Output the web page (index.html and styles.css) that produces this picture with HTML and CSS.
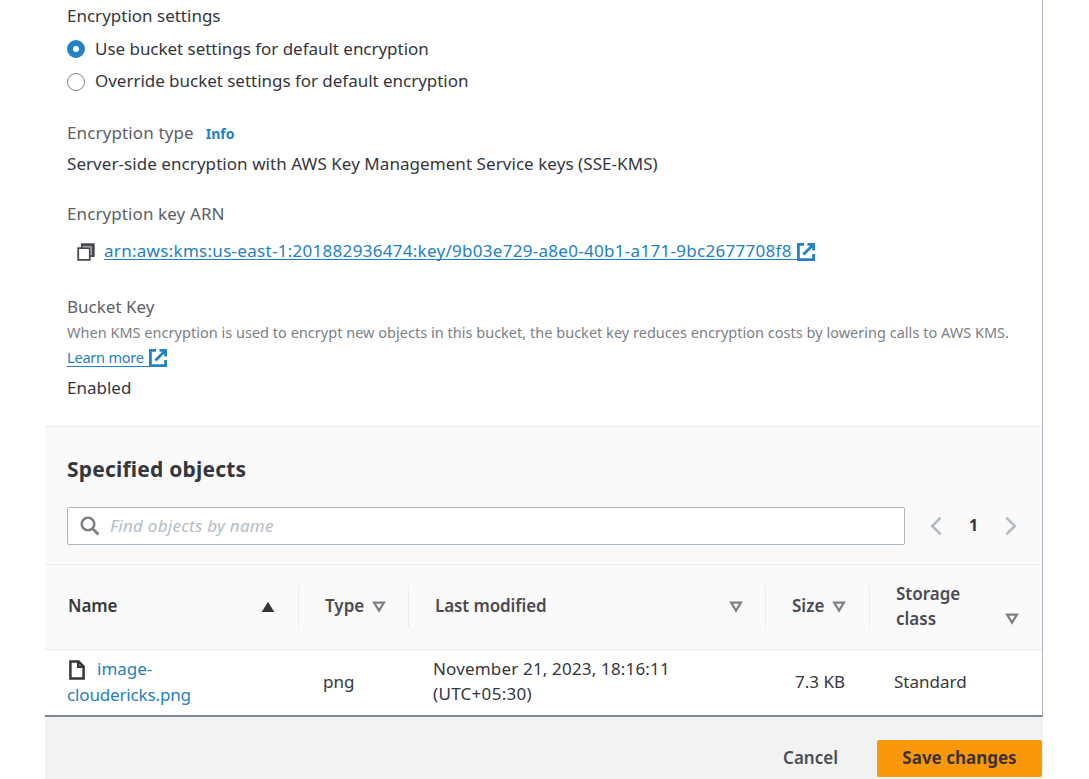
FILE: index.html
```html
<!DOCTYPE html>
<html lang="en">
<head>
<meta charset="utf-8">
<title>Edit server-side encryption</title>
<link rel="stylesheet" href="styles.css">
</head>
<body>
<svg class="defs" width="0" height="0">
  <symbol id="external" viewBox="0 0 18 18"><path d="M7 1.4H1.4v15.2h15.2V11M10.5 1.4h6.1v6.1M16 2 6.4 11.6" fill="none" stroke="currentColor" stroke-width="2.8"/></symbol>
  <symbol id="sort" viewBox="0 0 14 12"><path d="M2.1 1.6h9.8L7 9.6z" fill="none" stroke="currentColor" stroke-width="2.2"/></symbol>
</svg>
<main class="page">
  <div class="panel">
    <section class="settings">
      <div class="row heading"><span class="t-settings">Encryption settings</span></div>
      <label class="row option"><span class="radio checked"></span><span class="t-use">Use bucket settings for default encryption</span></label>
      <label class="row option second"><span class="radio"></span><span class="t-override">Override bucket settings for default encryption</span></label>
      <div class="row label type"><span class="t-type">Encryption type</span><a class="info">Info</a></div>
      <div class="row value"><span class="t-sse">Server-side encryption with AWS Key Management Service keys (SSE-KMS)</span></div>
      <div class="row label arn-label"><span class="t-arn-label">Encryption key ARN</span></div>
      <div class="row arn">
        <svg class="copy" viewBox="0 0 18 18"><path d="M1.2 5.2h11.6v11.6H1.2zM4.8 5V1.2h12v12h-3.8M4.8 2.6h10.6v10.6" fill="none" stroke="currentColor" stroke-width="1.8"/></svg>
        <a class="link"><span class="t-arn">arn:aws:kms:us-east-1:201882936474:key/9b03e729-a8e0-40b1-a171-9bc2677708f8</span></a><svg class="ext"><use href="#external"/></svg>
      </div>
      <div class="row label key"><span class="t-key">Bucket Key</span></div>
      <div class="row hint"><span class="t-hint">When KMS encryption is used to encrypt new objects in this bucket, the bucket key reduces encryption costs by lowering calls to AWS KMS.</span></div>
      <div class="row hint learn"><a class="link"><span class="t-learn">Learn more</span></a><svg class="ext"><use href="#external"/></svg></div>
      <div class="row enabled"><span class="t-enabled">Enabled</span></div>
    </section>
    <section class="objects">
      <header class="toolbar">
        <h2><span class="t-title">Specified objects</span></h2>
        <div class="tools">
          <div class="search">
            <svg class="lens" viewBox="0 0 20 20"><circle cx="8" cy="8" r="6.3" fill="none" stroke="currentColor" stroke-width="2.6"/><path d="m12.5 12.5 6 6" stroke="currentColor" stroke-width="2.8"/></svg>
            <span class="placeholder">Find objects by name</span>
          </div>
          <nav class="pager">
            <svg viewBox="0 0 12 20"><path d="M10.6 1.6 2.2 10l8.4 8.4" fill="none" stroke="currentColor" stroke-width="2.6"/></svg>
            <b>1</b>
            <svg viewBox="0 0 12 20"><path d="M1.4 1.6 9.8 10l-8.4 8.4" fill="none" stroke="currentColor" stroke-width="2.6"/></svg>
          </nav>
        </div>
      </header>
      <div class="grid head">
        <div class="cell name"><span class="t-name">Name</span><svg class="sort asc" viewBox="0 0 14 12"><path d="M7 .8 13.4 11H.6z" fill="currentColor"/></svg></div>
        <div class="cell"><span class="t-th-type">Type</span><svg class="sort"><use href="#sort"/></svg></div>
        <div class="cell"><span class="t-modified">Last modified</span><svg class="sort"><use href="#sort"/></svg></div>
        <div class="cell"><span class="t-size">Size</span><svg class="sort"><use href="#sort"/></svg></div>
        <div class="cell storage"><span class="t-storage">Storage<br>class</span><svg class="sort"><use href="#sort"/></svg></div>
      </div>
      <div class="grid body">
        <div class="cell file"><div class="first"><svg class="doc" viewBox="0 0 16 20"><path d="M1.4 1.4h8.2l5 5v12.2H1.4zM9.2 1.4v5.4h5.4" fill="none" stroke="currentColor" stroke-width="2.5"/></svg><span class="t-image">image-</span></div><div class="t-cloud">cloudericks.png</div></div>
        <div class="cell"><span class="t-png">png</span></div>
        <div class="cell date"><span class="t-date">November 21, 2023, 18:16:11</span><span class="t-utc">(UTC+05:30)</span></div>
        <div class="cell size"><span class="t-kb">7.3 KB</span></div>
        <div class="cell"><span class="t-standard">Standard</span></div>
      </div>
    </section>
  </div>
  <footer class="actions"><span class="cancel">Cancel</span><span class="save">Save changes</span></footer>
</main>
</body>
</html>
```
FILE: styles.css
```css
* { box-sizing: border-box; }
body { margin: 0; background: #fff; color: #35363d; font: 17px/25px "Noto Sans", sans-serif; overflow: hidden; }
.defs { display: block; height: 0; }
.page { width: 998px; height: 779px; margin-left: 45px; display: flex; flex-direction: column; }
.panel { height: 717px; border-right: 1px solid #aab7c2; border-bottom: 2px solid #7d848b; }
.settings { height: 427px; padding-left: 22px; border-bottom: 1px solid #eaeded; }
.row { display: flex; align-items: center; height: 32px; white-space: nowrap; }
.row > span:not(.radio) { padding-bottom: 2px; }
.option { height: 34px; }
.option.second { height: 31px; }
.radio { width: 18px; height: 18px; margin-right: 10px; border: 1.5px solid #7f868d; border-radius: 50%; background: #fff; }
.radio.checked { border: 6px solid #2380c3; }
.label { color: #5c6067; }
.type { margin-top: 20px; }
.info { margin-left: 12px; color: #2380c3; font-size: 14px; font-weight: 700; }
.value { height: 30px; }
.arn-label { margin-top: 19px; }
.arn { margin-top: 5px; padding-left: 10px; }
.copy { width: 18px; height: 18px; margin: 2px 9px 0 0; color: #4a4950; }
.link, .t-image, .t-cloud { color: #2380c3; }
.link { padding-right: 5px; text-decoration: none; }
.link span { display: block; height: 19px; margin-top: -2px; line-height: 20px; padding-right: 5px; margin-right: -5px; border-bottom: 1px solid #2380c3; }
.arn .ext { margin-top: 1px; }
.ext { width: 18px; height: 18px; color: #2380c3; }
.key { margin-top: 24px; }
.hint { height: 24px; margin-top: -2px; color: #7b7f86; font-size: 14.5px; }
.learn { margin-top: 1px; }
.learn .link span { line-height: 18px; }
.enabled { margin-top: 2px; }
.t-use, .t-override { letter-spacing: -.03px; }
.t-type { letter-spacing: .13px; }
.t-arn-label { letter-spacing: .1px; }
.t-sse { letter-spacing: .06px; }
.t-arn { letter-spacing: .29px; }
.t-hint { letter-spacing: .018px; }
.t-learn { letter-spacing: -.2px; }
.objects { height: 288px; }
.toolbar { height: 138px; padding: 24px 22px 0; background: #fafafa; border-bottom: 1px solid #eaeded; }
h2 { margin: 0; font-size: 21px; line-height: 36px; font-weight: 700; letter-spacing: .2px; }
.tools { display: flex; align-items: center; margin-top: 20px; }
.search { display: flex; align-items: center; width: 838px; height: 38px; padding-left: 12px; background: #fff; border: 1px solid #aab7c2; border-radius: 2px; }
.lens { width: 20px; height: 20px; margin-right: 10px; color: #7c8086; }
.placeholder { padding-bottom: 2px; color: #b3bdc6; font-style: italic; letter-spacing: .25px; }
.pager { display: flex; align-items: center; justify-content: space-between; width: 87px; margin-left: 25px; color: #b0bbc4; }
.pager svg { width: 12px; height: 20px; }
.pager b { padding-bottom: 2px; color: #35363d; font-size: 16px; }
.grid { display: grid; grid-template-columns: 253px 110px 357px 104px 173px; }
.head { grid-template-rows: 43px; height: 85px; padding: 20px 0; background: #fafafa; border-bottom: 1px solid #eaeded; font-weight: 600; color: #4a4b52; }
.cell { display: flex; align-items: center; }
.head .cell { padding-left: 26px; border-left: 1px solid #eaeded; }
.head .cell > span { margin: -4px 0; padding-bottom: 1px; }
.head .cell:not(.storage) > span { padding-bottom: 2px; }
.head .name { padding-left: 23px; border-left: 0; color: #35363d; }
.t-name, .t-modified { letter-spacing: -.1px; }
.sort { width: 14px; height: 12px; margin: 1px 0 0 8px; color: #7c8086; }
.asc { color: #35363d; margin: 0 23px 0 auto; }
.head .cell:nth-child(3) .sort { margin: 1px 22px 0 auto; }
.head .storage .sort { align-self: flex-end; margin: 0 23px 3px auto; }
.body .cell { padding-left: 25px; }
.body .file { display: block; padding: 6px 0 0 22px; }
.first { display: flex; align-items: center; height: 25px; }
.doc { width: 16px; height: 20px; margin: 2px 12px 0 2px; color: #38343b; }
.t-cloud { line-height: 28px; letter-spacing: -.15px; }
.t-date { letter-spacing: .17px; }
.t-utc { letter-spacing: .3px; }
.body { height: 65px; }
.body .cell:not(.file) { padding-bottom: 3px; }
.body .date { flex-direction: column; align-items: flex-start; justify-content: center; }
.body .size { justify-content: flex-end; padding-right: 24px; }
.actions { display: flex; justify-content: flex-end; height: 62px; padding: 23px 1px 0 0; background: #f1f3f3; font-weight: 600; }
.cancel { padding: 5px 39px 0 0; color: #4c4e55; }
.save { width: 165px; height: 37px; border-radius: 2px; background: #fa980b; text-align: center; line-height: 36px; font-weight: 700; color: #3d3234; }
```
